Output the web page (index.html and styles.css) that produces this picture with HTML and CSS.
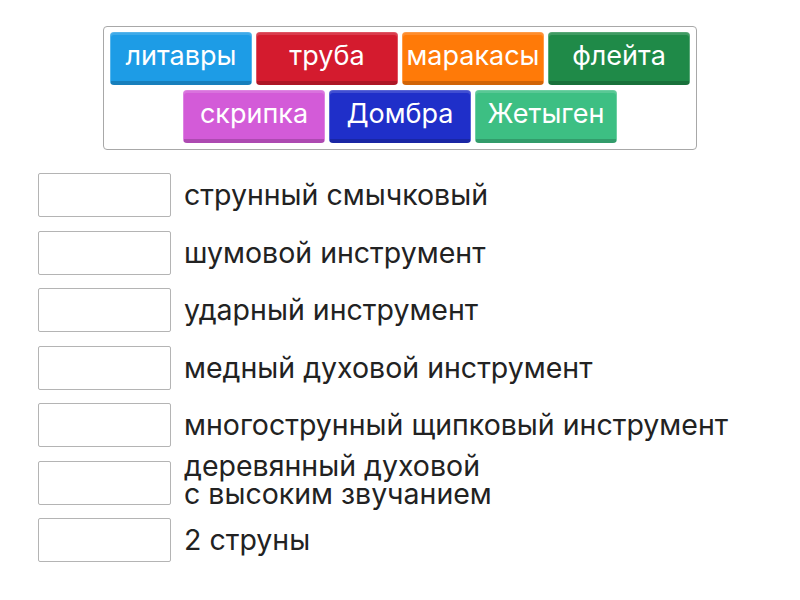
FILE: index.html
```html
<!DOCTYPE html>
<html lang="ru">
<head>
<meta charset="utf-8">
<link rel="stylesheet" href="styles.css">
</head>
<body>
<div class="page">
  <div class="bank">
    <div class="bank-row">
      <div class="tile blue">литавры</div>
      <div class="tile red">труба</div>
      <div class="tile orange">маракасы</div>
      <div class="tile green">флейта</div>
    </div>
    <div class="bank-row">
      <div class="tile magenta">скрипка</div>
      <div class="tile navy">Домбра</div>
      <div class="tile mint">Жетыген</div>
    </div>
  </div>
  <div class="list">
    <div class="item"><div class="slot"></div><div class="label">струнный смычковый</div></div>
    <div class="item"><div class="slot"></div><div class="label">шумовой инструмент</div></div>
    <div class="item"><div class="slot"></div><div class="label">ударный инструмент</div></div>
    <div class="item"><div class="slot"></div><div class="label">медный духовой инструмент</div></div>
    <div class="item"><div class="slot"></div><div class="label">многострунный щипковый инструмент</div></div>
    <div class="item"><div class="slot"></div><div class="label multi">деревянный духовой<br>с высоким звучанием</div></div>
    <div class="item"><div class="slot"></div><div class="label">2 струны</div></div>
  </div>
</div>
</body>
</html>
```
FILE: styles.css
```css
* { box-sizing: border-box; }
html, body { margin: 0; padding: 0; background: #fff; }
body { font-family: Inter, "Noto Sans", sans-serif; color: #222; }
.page { width: 800px; height: 600px; padding-top: 26px; }
.bank {
  width: 594px;
  margin-left: 103px;
  border: 1px solid #a8a8a8;
  border-radius: 4px;
  padding: 5px 0 6px;
  display: flex;
  flex-direction: column;
  gap: 5px;
}
.bank-row { display: flex; justify-content: center; gap: 4px; }
.tile {
  width: 142px;
  height: 53px;
  border-radius: 4px;
  color: #fff;
  font-size: 27px;
  display: flex;
  align-items: center;
  justify-content: center;
  padding-bottom: 3px;
  border: 1px solid rgba(255,255,255,0.25);
  border-bottom: 4px solid rgba(0,0,0,0.18);
  box-shadow: inset 0 2px 0 rgba(255,255,255,0.15);
}
.blue { background: #1d9ce6; }
.red { background: #d41b2e; }
.orange { background: #ff7a08; }
.green { background: #1f8a48; }
.magenta { background: #d35bd8; }
.navy { background: #1f2fc9; }
.mint { background: #3dbf83; }
.list { margin-top: 23px; padding-left: 38px; display: flex; flex-direction: column; gap: 13.5px; }
.item { display: flex; align-items: center; height: 44px; }
.slot { width: 133px; height: 44px; border: 1px solid #b4b4b4; border-radius: 2px; flex: none; }
.label { margin-left: 13px; font-size: 28.5px; line-height: 30px; color: #222; }
.label.multi { line-height: 28px; margin-bottom: 6px; }
```
